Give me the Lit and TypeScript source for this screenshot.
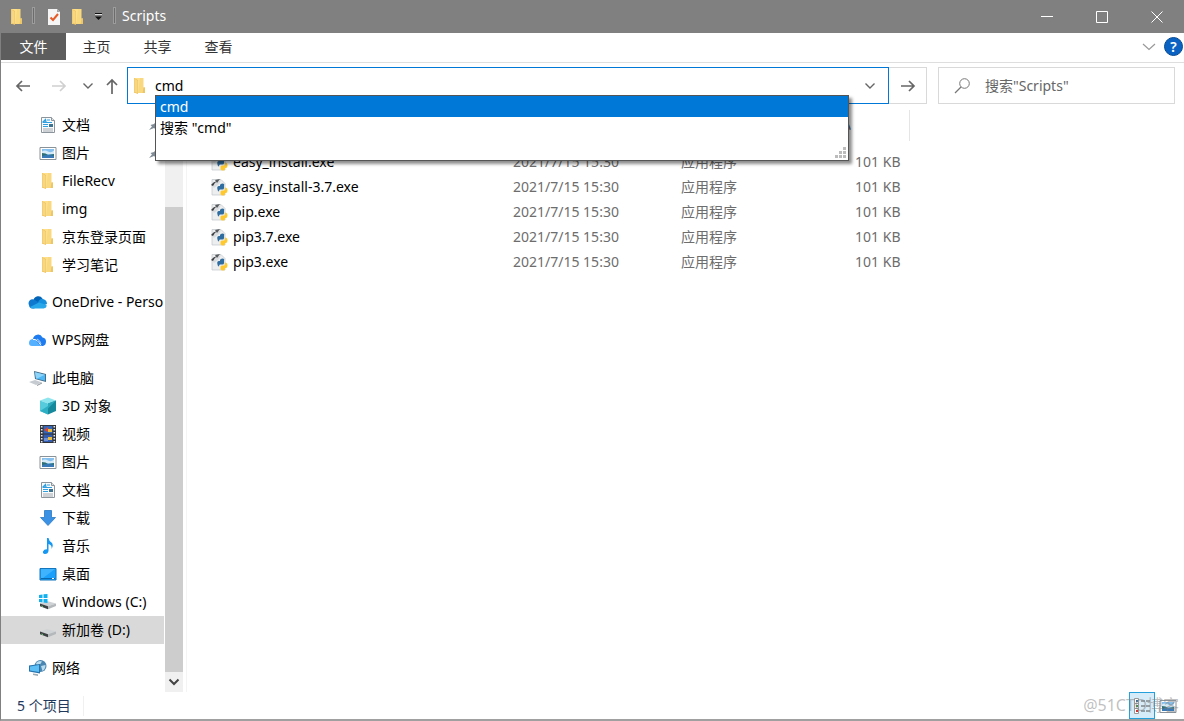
import { LitElement, html, css, svg, nothing } from "lit";
import { customElement } from "lit/decorators.js";
import { classMap } from "lit/directives/class-map.js";

const wrap = (inner: unknown, w = 18, h = 18, cls = "") =>
  html`<svg class=${cls} width=${w} height=${h} viewBox="0 0 ${w} ${h}" aria-hidden="true">${inner}</svg>`;

const folder = () =>
  wrap(svg`<path d="M3 1h9v15H3z" fill="#ffe08a"/><path d="M9 1h3.500v9.500H14V16H7z" fill="#f9d980"/><path d="M12.500 10.500H14V16h-2.500z" fill="#edc668"/><path d="M3 1l4 2v14l-4-1.500z" fill="#ecc262"/><path d="M3.500 1.800L6.500 3.500v12.500l-3-1z" fill="#f8d782"/>`);

const doc = () =>
  wrap(svg`<path d="M2.500 1.500h10l3 3v12h-13z" fill="#fafbfc" stroke="#8d959c"/><path d="M12.500 1.500v3h3" fill="#dfe3e6" stroke="#8d959c"/><path d="M4 6.500h9M6.500 3.500L4 6h3zM8 4h3M4 8.500h5M4 10.500h5" stroke="#2f9fe0" stroke-width="1.200" fill="none"/><path d="M10 8h4v3h-4z" fill="#3f7190"/><path d="M4 13h10M4 15h10" stroke="#a2a8ad"/>`);

const picture = () =>
  wrap(svg`<path d="M1 3.500h16v12H1z" fill="#fff" stroke="#8a9299"/><path d="M3 5h12v9H3z" fill="#86c0ef"/><path d="M3 7.500q3-2 6 0t6-1V10H3z" fill="#d6ebf7"/><path d="M3 9q4 0 6 2l6-1v4H3z" fill="#2d6f74"/><path d="M3 12q6-2 12 0v2H3z" fill="#3a79b8"/>`);

const oneDrive = () =>
  wrap(svg`<path d="M5.500 7a5 5 0 0 1 9-1.500l-3 5-8-2z" fill="#0364b8"/><path d="M1 12a4 4 0 0 1 5-5.500l8 5-8 4H4.500A3.700 3.700 0 0 1 1 12z" fill="#0f79d0"/><path d="M10 9.500q2-4.500 5-3.500 4 1 4 5l-5 2z" fill="#1490df"/><path d="M2 14l9-4.500 7.500 2.500q.500 3-3 3.500H5q-2 0-3-1.500z" fill="#28a8ea"/>`, 20, 18);

const wps = () =>
  wrap(svg`<path d="M5 8a5 5 0 0 1 9.500-1.500Q18 7 18 10.500T15 15h-3z" fill="#1f7cf0"/><path d="M1 12q0-3.500 3.500-4Q7 8 10 12l2.500 3H4Q1 15 1 12z" fill="#55b0ff"/><path d="M5 8.500q4-1 8 6" stroke="#fff" fill="none"/><path d="M9 8q3 1 4 5" stroke="#a9d2ff" fill="none"/>`, 20, 18);

const pc = () =>
  wrap(svg`<path d="M6 2l12 3v8L7 10z" fill="#456b86"/><path d="M7 3.200l10 2.600v6L8 9.400z" fill="#4db8f5"/><path d="M7 3.200l10 2.600-8 3.600H8z" fill="#8cd4fa"/><path d="M1 13l6-2 7 2.500L8 16z" fill="#c5cbd0"/><path d="M9 16l5-2.500v1L9 17z" fill="#8b949b"/>`, 20, 18);

const cube = () =>
  wrap(svg`<path d="M9 .5l8 3-8 3-8-3z" fill="#8fe5ee"/><path d="M1 3.500l8 3v11l-8-3.500z" fill="#56cbdc"/><path d="M17 3.500l-8 3v11l8-3.500z" fill="#16899d"/><path d="M1 14l8-5v8.500z" fill="#2eafc4"/><path d="M9 6.500l8-3-8 8z" fill="#2ba8bc"/>`);

const film = () =>
  wrap(svg`<path d="M1 0h16v18H1z" fill="#303337"/><path d="M4.500 1h9v7.500h-9z" fill="#3567bb"/><path d="M4.500 9.500h9V17h-9z" fill="#345cae"/><path d="M5 5l4-3v5z" fill="#d64835"/><path d="M9 4h4v3H9zM9 12h4v3H9z" fill="#e9bc3d"/><path d="M5 13h4v3H5z" fill="#6b90d8"/><path d="M2.700 1v17M15.300 1v17" stroke="#e8eaec" stroke-width="1.600" stroke-dasharray="1.600 1.400"/>`);

const download = () =>
  wrap(svg`<path d="M5.500 1.500h7v7h4L9 16.500 1.500 8.500h4z" fill="#3b92e4" stroke="#2a78c4" stroke-width=".8"/>`);

const music = () =>
  wrap(svg`<path d="M8 1h1.500q.5 3 3 4.500 2.500 2.500 0 6.500.8-4-3-5v7q-.5 3-3.500 3-2.500-.2-2-2.500Q5 12 8 12.200z" fill="#1597f2"/>`);

const desktop = () =>
  wrap(svg`<path d="M1 3.500h16v11.500H1z" fill="#1ba1fb" stroke="#1477bd"/><path d="M2 4h14L4 13H2z" fill="#40b3ff"/><path d="M2 13.500h14" stroke="#0d69ad"/><path d="M13 13.500h2" stroke="#fff"/>`);

const drive = (win: boolean) =>
  wrap(svg`<path d="M1 10.500L8 8l9 2.500-8 3z" fill="#d0d3d5"/><path d="M1 10.500l8 2.700v3l-8-3z" fill="#3c4043"/><path d="M9 13.200l8-2.700v2.500l-8 3.200z" fill="#b4b8bb"/><path d="M2.500 13l1.500.6" stroke="#5ad06b"/>${
    win ? svg`<path d="M0 2l3.500-.5V5H0zM4.500 1.300L8.500 1v4h-4zM0 6h3.500v3.500L0 9zM4.500 6h4v4l-4-.5z" fill="#12b1ee"/>` : nothing
  }`);

const network = () =>
  wrap(svg`<circle cx="12.500" cy="7" r="6" fill="#4a86b0"/><path d="M8 4q3-3 6-1.500l-2 3-3 1.500zM13 7l4.500-1q0 4-3 6z" fill="#b9dcef"/><path d="M1 6.500l11-1.500v9.500L1 12.500z" fill="#2673ad"/><path d="M2 7.400l9-1.300v7L2 11.600z" fill="#5cc0f7"/><path d="M5 14.500l5 .8v1.700l-5-1z" fill="#9cabb6"/>`, 20, 18);

const pyExe = () =>
  wrap(svg`<path d="M2 1.500h9l4 4V17H2z" fill="#eceef0" stroke="#c2c6c9" stroke-width=".7"/><path d="M2 8l6-5 3-1-2 4-5 4z" fill="#d9dcde"/><path d="M1 7q2-3 6-4L4.500 5.500 3 8z" fill="#3a3d40"/><path d="M5 2l5-1-3 4z" fill="#55595c"/><path d="M7.500 11.500q-1-3.500 1.500-3.500h1V7q.3-1.500 2.500-1.500T14 7.500v2.500q0 1.500-1.500 1.500H10q-1 0-1 2-1.300 0-1.500-2z" fill="#2f6c9f"/><path d="M15 9.500q2.500 0 2.500 3T15 15v1q0 1.500-2 1.500T10.500 16v-2q0-1.500 1.500-1.500h2q1 0 1-1.500z" fill="#ffc92e"/>`);

const pin = () => wrap(svg`<path d="M1 11l3-3.500L2.500 6 6 5l3-3.500L12 4 9 7.500 8 10.500 6 9z" fill="#7f8b95"/>`, 12, 12, "pin");

const chevron = (cls = "") => wrap(svg`<path d="M1.500 3.500L6 8l4.500-4.500" fill="none" stroke="currentColor" stroke-width="1.400"/>`, 12, 12, cls);

interface NavItem { label: string; icon: () => unknown; pinned?: boolean; root?: boolean; selected?: boolean; }

const groups: NavItem[][] = [
  [
    { label: "文档", icon: doc, pinned: true },
    { label: "图片", icon: picture, pinned: true },
    { label: "FileRecv", icon: folder },
    { label: "img", icon: folder },
    { label: "京东登录页面", icon: folder },
    { label: "学习笔记", icon: folder },
  ],
  [{ label: "OneDrive - Perso", icon: oneDrive, root: true }],
  [{ label: "WPS网盘", icon: wps, root: true }],
  [
    { label: "此电脑", icon: pc, root: true },
    { label: "3D 对象", icon: cube },
    { label: "视频", icon: film },
    { label: "图片", icon: picture },
    { label: "文档", icon: doc },
    { label: "下载", icon: download },
    { label: "音乐", icon: music },
    { label: "桌面", icon: desktop },
    { label: "Windows (C:)", icon: () => drive(true) },
    { label: "新加卷 (D:)", icon: () => drive(false), selected: true },
  ],
  [{ label: "网络", icon: network, root: true }],
];

const files = ["easy_install.exe", "easy_install-3.7.exe", "pip.exe", "pip3.7.exe", "pip3.exe"];

@customElement("app-root")
export class AppRoot extends LitElement {
  static styles = css`
    :host { display: block; font: 14px/20px "Noto Sans", "Noto Sans CJK SC", sans-serif; color: #000; }
    * { box-sizing: border-box; }
    button, input { font: inherit; color: inherit; border: 0; background: none; padding: 0; margin: 0; outline: 0; }
    a { color: inherit; text-decoration: none; }
    svg { display: block; flex: none; }
    .window { position: relative; display: flex; flex-direction: column; height: 100vh; background: #fff; border-left: 1px solid #808080; border-bottom: 2px solid #a0a0a0; overflow: hidden; }
    .title { display: flex; align-items: center; height: 33px; background: #808080; color: #fff; padding-left: 7px; flex: none; }
    .title h1 { font: inherit; margin: 0; flex: 1; padding: 0 0 2px 6px; }
    .sep { width: 3px; height: 17px; border: 1px solid #9c9c9c; background: #6c6c6c; margin: 0 0 2px 6px; }
    .quick { margin-left: 10px; }
    .quick + .quick { margin-left: 6px; }
    .more { margin: 0 3px 0 5px; }
    .caption { display: grid; place-items: center; width: 55px; height: 30px; }
    .tabs { display: flex; height: 30px; border-bottom: 1px solid #dedede; flex: none; align-items: flex-start; color: #333; }
    .tab { width: 61px; height: 27px; text-align: center; }
    .tab.file { width: 65px; background: #5d5d5d; color: #fff; }
    .expand { margin-left: auto; padding: 6px 0; color: #999; }
    .help { width: 19px; height: 19px; margin: 4px 1px 0 8px; border-radius: 50%; background: #0a63c2; border: 1px solid #064a94; color: #fff; line-height: 17px; font-weight: 600; }
    .bar { display: flex; height: 47px; flex: none; padding: 4px 9px 6px 13px; color: #666; }
    .bar .history { display: flex; align-items: center; width: 113px; }
    .history .forward { margin-left: 18px; color: #d0d0d0; }
    .history .recent { margin-left: 14px; }
    .history .up { margin-left: 9px; }
    .address { position: relative; flex: 1; display: flex; align-items: center; border: 1px solid #0078d7; padding: 0 12px 0 3px; min-width: 0; }
    .address input { flex: 1; min-width: 0; color: #000; padding-left: 6px; }
    .go { width: 38px; border: 1px solid #d9d9d9; border-left: 0; display: grid; place-items: center; }
    .search { width: 237px; margin-left: 11px; border: 1px solid #d9d9d9; display: flex; align-items: center; padding-left: 14px; }
    .search input { flex: 1; min-width: 0; padding-left: 14px; }
    .search input::placeholder { color: #666; opacity: 1; }
    .popup { position: absolute; left: 27px; right: 39px; top: 27px; height: 66px; background: #fff; border: 1px solid #555; box-shadow: 3px 3px 3px rgba(0, 0, 0, 0.45); color: #000; z-index: 2; display: flex; flex-direction: column; }
    .option { height: 21px; padding-left: 4px; text-align: left; }
    .option.active { background: #0078d7; color: #fff; }
    .grip { align-self: flex-end; margin: auto 1px 1px 0; }
    .body { flex: 1; display: flex; min-height: 0; }
    .nav { width: 163px; display: flex; flex-direction: column; gap: 9px; padding-top: 1px; flex: none; overflow: hidden; }
    .group + .group + .group { padding-top: 1px; }
    .item { display: flex; align-items: center; height: 28px; padding-left: 38px; gap: 5px; white-space: nowrap; }
    .item.root { padding-left: 27px; gap: 4px; }
    .item.selected { background: #d9d9d9; }
    .pin { margin-left: auto; margin-right: 4px; }
    .scroll { width: 19px; margin-left: 1px; border-right: 1px solid #fff; background: #f0f0f0; display: flex; flex-direction: column; flex: none; }
    .thumb { background: #cdcdcd; flex: 1; margin-top: 97px; }
    .down { height: 20px; display: grid; place-items: center; color: #444; }
    .main { flex: 1; margin-left: 2px; border-left: 1px solid #f4f4f4; padding-left: 18px; min-width: 0; }
    table { border-collapse: collapse; table-layout: fixed; width: 705px; }
    th { height: 31px; padding: 0 0 0 6px; font-weight: 400; text-align: left; color: #4c607a; }
    th:last-child { border-right: 1px solid #e5e5e5; }
    .gap td { height: 8px; padding: 0; }
    td { height: 25px; padding: 0 0 0 6px; color: #6d6d6d; white-space: nowrap; }
    .name { width: 302px; }
    .date { width: 168px; }
    .type { width: 142px; }
    td:first-child { padding-left: 5px; }
    td:last-child { text-align: right; padding-right: 9px; }
    .file-cell { display: flex; align-items: center; gap: 5px; color: #000; }
    .status { height: 27px; flex: none; display: flex; align-items: center; padding: 0 3px 0 16px; color: #1e395b; }
    .count { padding-right: 12px; border-right: 1px solid #f0f0f0; }
    .views { margin-left: auto; display: flex; align-self: stretch; }
    .view { width: 26px; display: grid; place-items: center; }
    .view.on { background: #d6ecf9; border: 1px solid #26a0da; }
    .mark { position: absolute; right: 5px; bottom: 4px; font-size: 16px; color: rgba(130, 130, 130, 0.5); z-index: 1; pointer-events: none; }
  `;

  private arrow(d: string) {
    return wrap(svg`<path d=${d} fill="none" stroke="currentColor" stroke-width="1.700"/>`, 18, 18);
  }

  private navItem(i: NavItem) {
    return html`<a href="#" class=${classMap({ item: true, root: !!i.root, selected: !!i.selected })}>${i.icon()}<span>${i.label}</span>${i.pinned ? pin() : nothing}</a>`;
  }

  render() {
    return html`<div class="window">
      <header class="title">
        ${folder()}<span class="sep"></span>
        <button class="quick" aria-label="属性">${wrap(svg`<path d="M3 1h9l3 3v13H3z" fill="#f5f5f5"/><path d="M12 1v3h3z" fill="#a5a5a5"/><path d="M5.500 9.500L8 12l5-6" fill="none" stroke="#e65a28" stroke-width="2"/>`)}</button>
        <button class="quick" aria-label="新建文件夹">${folder()}</button>
        <button class="more" aria-label="自定义快速访问工具栏">${wrap(svg`<path d="M3 2.500h7" stroke="#111"/><path d="M3 3.500h7" stroke="#ddd"/><path d="M3 5.500h7L6.500 9z" fill="#111"/>`, 12, 12)}</button>
        <span class="sep"></span>
        <h1>Scripts</h1>
        <button class="caption" aria-label="最小化">${wrap(svg`<path d="M0 5.500h12" stroke="#fff"/>`, 12, 12)}</button>
        <button class="caption" aria-label="最大化">${wrap(svg`<path d="M.5.500h11v11H.5z" fill="none" stroke="#fff"/>`, 12, 12)}</button>
        <button class="caption" aria-label="关闭">${wrap(svg`<path d="M.5.500l11 11M11.500.500l-11 11" stroke="#fff"/>`, 12, 12)}</button>
      </header>
      <div class="tabs">
        <button class="tab file">文件</button><button class="tab">主页</button><button class="tab">共享</button><button class="tab">查看</button>
        <button class="expand" aria-label="展开功能区">${wrap(svg`<path d="M1 5l6 5.500L13 5" fill="none" stroke="currentColor" stroke-width="1.200"/>`, 14, 14)}</button>
        <button class="help" aria-label="帮助">?</button>
      </div>
      <div class="bar">
        <div class="history">
          <button aria-label="后退">${this.arrow("M16 9H3M8 4L3 9l5 5")}</button>
          <button class="forward" aria-label="前进">${this.arrow("M2 9h13M10 4l5 5-5 5")}</button>
          <button class="recent" aria-label="最近位置">${chevron()}</button>
          <button class="up" aria-label="上移">${this.arrow("M9 17V3M4 8l5-5 5 5")}</button>
        </div>
        <div class="address">
          ${folder()}
          <input aria-label="地址" role="combobox" aria-expanded="true" .value=${"cmd"} />
          <button aria-label="上一个位置">${chevron()}</button>
          <div class="popup">
            <button class="option active">cmd</button>
            <button class="option">搜索 "cmd"</button>
            ${wrap(svg`<path d="M8 0h3v3H8zM4 4h3v3H4zM8 4h3v3H8zM0 8h3v3H0zM4 8h3v3H4zM8 8h3v3H8z" fill="#bcbcbc"/>`, 12, 12, "grip")}
          </div>
        </div>
        <button class="go" aria-label="转到">${this.arrow("M2 9h13M10 4l5 5-5 5")}</button>
        <div class="search">
          ${wrap(svg`<circle cx="11.500" cy="6.500" r="4.800" fill="none" stroke="#777"/><path d="M8 10L2 16" stroke="#777" stroke-width="1.200"/>`)}
          <input aria-label="搜索" placeholder='搜索"Scripts"' />
        </div>
      </div>
      <div class="body">
        <nav class="nav">${groups.map((g) => html`<div class="group">${g.map((i) => this.navItem(i))}</div>`)}</nav>
        <div class="scroll"><div class="thumb"></div><button class="down" aria-label="向下滚动">${wrap(svg`<path d="M1.500 3.500L6 8l4.500-4.500" fill="none" stroke="currentColor" stroke-width="2"/>`, 12, 12)}</button></div>
        <main class="main">
          <table>
            <thead><tr><th class="name"></th><th class="date"></th><th class="type"></th><th>大小</th></tr></thead>
            <tbody>
              <tr class="gap"><td colspan="4"></td></tr>
              ${files.map((f) => html`<tr><td><div class="file-cell">${pyExe()}<span>${f}</span></div></td><td>2021/7/15 15:30</td><td>应用程序</td><td>101 KB</td></tr>`)}
            </tbody>
          </table>
        </main>
      </div>
      <footer class="status">
        <span class="count">5 个项目</span>
        <div class="views">
          <button class="view on" aria-label="详细信息">${wrap(svg`<path d="M1.500 1.500h4v15h-4zM1.500 6.500h4M1.500 11.500h4" fill="#fff" stroke="#999"/><path d="M3 3h2v2H3z" fill="#3b6a9a"/><path d="M3 8h2v2H3z" fill="#3b8a4a"/><path d="M3 13h2v2H3z" fill="#d0312b"/><path d="M8 4h9M8 9h9M8 14h9" stroke="#555" stroke-dasharray="4 1"/>`)}</button>
          <button class="view" aria-label="大图标">${picture()}</button>
        </div>
      </footer>
      <span class="mark">@51CTO博客</span>
    </div>`;
  }
}
